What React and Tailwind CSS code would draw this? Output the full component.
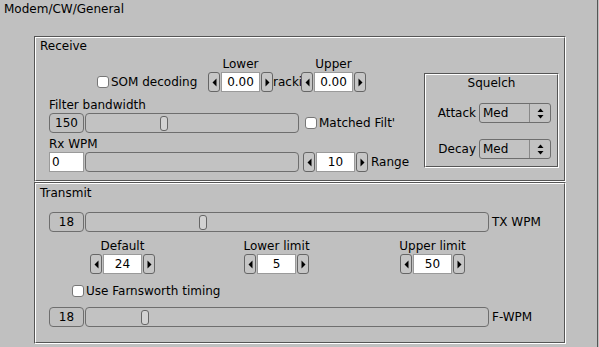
import React from 'react';

const Frame = ({ className, children }) => {
  return (
    <div className={`border-t border-l border-b border-r border-t-[#555] border-l-[#555] border-b-white border-r-white ${className}`}>
      <div className="h-full border border-t-white border-l-white border-b-[#555] border-r-[#555]">{children}</div>
    </div>
  );
};

const Arrow = ({ dir }) => (
  <svg width="5" height="9" viewBox="0 0 5 9">
    {dir === 'left' ? <polygon points="4.5,0.5 0.5,4.5 4.5,8.5" fill="#000" /> : <polygon points="0.5,0.5 4.5,4.5 0.5,8.5" fill="#000" />}
  </svg>
);

const SpinBtn = ({ dir }) => (
  <div className="w-[12px] h-full rounded-[3px] border border-[#666] bg-[#c6c6c6] flex items-center justify-center">
    <Arrow dir={dir} />
  </div>
);

const Spinner = ({ value, label }) => (
  <div className="flex flex-col items-center w-[65px]">
    {label && <div className="h-[14px] leading-[14px] mb-[1px] whitespace-nowrap">{label}</div>}
    <div className="flex gap-[1px] h-[20px] w-full">
      <SpinBtn dir="left" />
      <div className="w-[39px] bg-white border border-[#9a9a9a] flex items-center justify-center leading-none">{value}</div>
      <SpinBtn dir="right" />
    </div>
  </div>
);

const Check = ({ label, className }) => (
  <div className={`flex items-center gap-[2px] ${className}`}>
    <div className="w-[12px] h-[12px] rounded-[3px] border border-[#777] bg-white" />
    <span className="leading-[14px] whitespace-nowrap">{label}</span>
  </div>
);

const Slider = ({ width, knob }) => (
  <div className={`h-[20px] rounded-[4px] border border-[#6e6e6e] bg-[#c2c2c2] flex items-center ${width}`}>
    {knob !== undefined && (
      <div className="w-[8px] h-[15px] rounded-[3px] border border-[#666] bg-[#d2d2d2]" style={{ marginLeft: knob }} />
    )}
  </div>
);

const ValueBox = ({ value }) => (
  <div className="w-[35px] h-[20px] rounded-[4px] border border-[#6e6e6e] bg-[#c0c0c0] flex items-center justify-center leading-none">{value}</div>
);

const Choice = ({ value }) => (
  <div className="w-[72px] h-[20px] rounded-[3px] border border-[#6e6e6e] bg-[#c2c2c2] flex items-center">
    <span className="pl-[3px] w-[49px] leading-none">{value}</span>
    <div className="h-full border-l border-[#888] flex-1 flex items-center justify-center">
      <svg width="7" height="11" viewBox="0 0 7 11">
        <polygon points="3.5,0.5 6.5,4 0.5,4" fill="#000" />
        <polygon points="0.5,7 6.5,7 3.5,10.5" fill="#000" />
      </svg>
    </div>
  </div>
);

const App = () => {
  return (
    <div className="w-[599px] h-[347px] bg-[#c0c0c0] overflow-hidden text-[12px] text-black font-['DejaVu_Sans',sans-serif]">
      <div className="w-[598px] h-[347px] border-r border-[#555]">
        <div className="pt-[2px] pl-[4px] leading-[14px]">Modem/CW/General</div>

        <Frame className="ml-[34px] mt-[20px] w-[532px] h-[146px]">
          <div className="flex">
            <div className="w-[388px]">
              <div className="mt-[1px] ml-[4px] h-[14px] leading-[14px]">Receive</div>

              <div className="mt-[4px] flex items-end">
                <div className="w-[111px] ml-[61px] h-[20px] flex items-center">
                  <Check label="SOM decoding" />
                </div>
                <Spinner label="Lower" value="0.00" />
                <div className="w-[28px] h-[20px] overflow-hidden flex items-center leading-[14px] whitespace-nowrap">racki</div>
                <Spinner label="Upper" value="0.00" />
              </div>

              <div className="mt-[6px] ml-[13px] h-[14px] leading-[14px]">Filter bandwidth</div>
              <div className="mt-[1px] ml-[13px] flex items-center">
                <ValueBox value="150" />
                <div className="ml-[1px]"><Slider width="w-[214px]" knob={74} /></div>
                <Check label="Matched Filt'" className="ml-[6px]" />
              </div>

              <div className="mt-[4px] ml-[13px] h-[14px] leading-[14px]">Rx WPM</div>
              <div className="mt-[1px] ml-[13px] flex items-center">
                <div className="w-[35px] h-[20px] bg-white border border-[#9a9a9a] flex items-center pl-[2px] leading-none">0</div>
                <div className="ml-[1px]"><Slider width="w-[214px]" /></div>
                <div className="ml-[4px]"><Spinner value="10" /></div>
                <span className="ml-[3px] leading-[14px]">Range</span>
              </div>
            </div>

            <Frame className="mt-[35px] w-[135px] h-[95px]">
              <div className="mt-[1px] h-[14px] leading-[14px] text-center">Squelch</div>
              <div className="mt-[13px] flex items-center justify-end gap-[3px] pr-[6px]">
                <span className="leading-[14px]">Attack</span>
                <Choice value="Med" />
              </div>
              <div className="mt-[16px] flex items-center justify-end gap-[3px] pr-[6px]">
                <span className="leading-[14px]">Decay</span>
                <Choice value="Med" />
              </div>
            </Frame>
          </div>
        </Frame>

        <Frame className="ml-[34px] w-[532px] h-[162px]">
          <div className="mt-[2px] ml-[4px] h-[14px] leading-[14px]">Transmit</div>

          <div className="mt-[12px] ml-[13px] flex items-center">
            <ValueBox value="18" />
            <div className="ml-[1px]"><Slider width="w-[404px]" knob={113} /></div>
            <span className="ml-[3px] leading-[14px]">TX WPM</span>
          </div>

          <div className="mt-[7px] flex">
            <div className="ml-[54px]"><Spinner label="Default" value="24" /></div>
            <div className="ml-[89px]"><Spinner label="Lower limit" value="5" /></div>
            <div className="ml-[91px]"><Spinner label="Upper limit" value="50" /></div>
          </div>

          <Check label="Use Farnsworth timing" className="mt-[10px] ml-[36px]" />

          <div className="mt-[9px] ml-[13px] flex items-center">
            <ValueBox value="18" />
            <div className="ml-[1px]"><Slider width="w-[404px]" knob={55} /></div>
            <span className="ml-[3px] leading-[14px]">F-WPM</span>
          </div>
        </Frame>
      </div>
    </div>
  );
};

export default App;
